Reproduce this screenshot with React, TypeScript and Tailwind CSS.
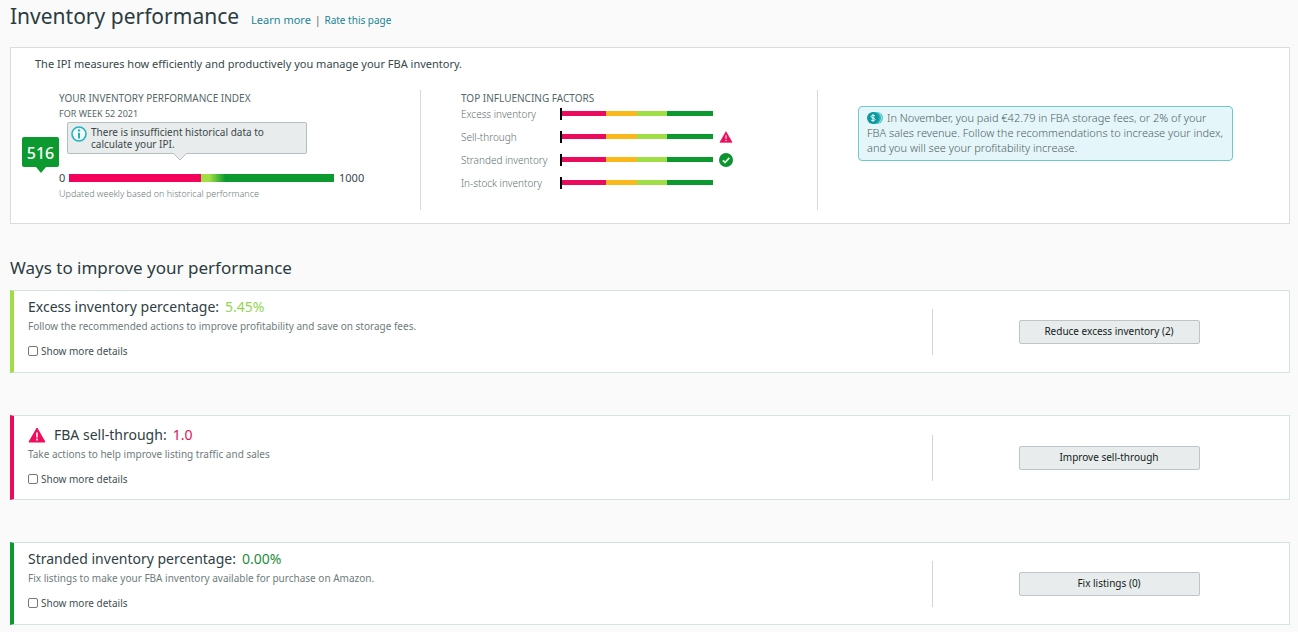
import React, { useState } from 'react';

const WarningIcon = ({ className }: { className: string }) => (
    <svg viewBox="0 0 18 16" className={className} aria-hidden="true">
        <path d="M9 1 17 15H1Z" fill="#ef0d5c" stroke="#ef0d5c" strokeWidth="1" strokeLinejoin="round" />
        <path d="M9 5.600V10.400" stroke="#ffd9e6" strokeWidth="1.8" />
        <circle cx="9" cy="12.600" r="1.1" fill="#ffd9e6" />
    </svg>
);

const CheckIcon = () => (
    <svg viewBox="0 0 14 14" className="size-3.5" aria-hidden="true">
        <circle cx="7" cy="7" r="7" fill="#0c9230" />
        <path d="M3.8 7.4 6 9.5 10.3 4.9" fill="none" stroke="#d9f7c9" strokeWidth="1.8" />
    </svg>
);

const InfoIcon = () => (
    <svg viewBox="0 0 16 16" className="size-4 shrink-0" aria-hidden="true">
        <circle cx="8" cy="8" r="7" fill="#f4fbfb" stroke="#1fb3c0" strokeWidth="1.6" />
        <path d="M8 6.8V12.4" stroke="#1fb3c0" strokeWidth="2" />
        <circle cx="8" cy="4.4" r="1.2" fill="#1fb3c0" />
    </svg>
);

const CoinsIcon = () => (
    <svg viewBox="0 0 16 12" className="mr-1 inline-block h-3 w-4 align-[-2px]" aria-hidden="true">
        <circle cx="10" cy="6" r="6" fill="#4cc3c9" />
        <circle cx="8.8" cy="6" r="6" fill="#b8eaec" />
        <circle cx="8" cy="6" r="6" fill="#2fb0b6" />
        <circle cx="6" cy="6" r="6" fill="#0b9aa0" />
        <path d="M8 4.1C7.6 3.5 6.9 3.3 6 3.3 4.9 3.3 4.1 3.8 4.1 4.6 4.1 6.4 8 5.5 8 7.4 8 8.2 7.2 8.7 6 8.7 5 8.7 4.3 8.4 3.9 7.8M6 2.2V9.8" fill="none" stroke="#fff" strokeWidth="1" />
    </svg>
);

type Status = 'warning' | 'ok';

const factors: { label: string; status?: Status }[] = [
    { label: 'Excess inventory' },
    { label: 'Sell-through', status: 'warning' },
    { label: 'Stranded inventory', status: 'ok' },
    { label: 'In-stock inventory' },
];

const FactorRow = ({ label, status }: { label: string; status?: Status }) => (
    <li className="flex h-[23px] items-center">
        <span className="w-[99px] shrink-0 pt-0.5 text-[10px] font-light whitespace-nowrap text-[#5f7070]">{label}</span>
        <span className="h-3 w-0.5 bg-black" />
        <span className="mr-1.5 flex h-[5px] w-[151px]">
            <span className="w-[44px] bg-[#ea0b5b]" />
            <span className="w-[31px] bg-[#fbb81a]" />
            <span className="w-[30px] bg-[#9fdf45]" />
            <span className="flex-1 bg-[#0c9a30]" />
        </span>
        {status === 'warning' && <WarningIcon className="h-3 w-3.5" />}
        {status === 'ok' && <CheckIcon />}
    </li>
);

interface ImproveProps {
    id: string;
    title: string;
    value: string;
    description: string;
    action: string;
    accent: string;
    valueColor: string;
    warning?: boolean;
}

const ImproveCard: React.FC<ImproveProps> = ({ id, title, value, description, action, accent, valueColor, warning }) => {
    const [showMore, setShowMore] = useState(false);

    return (
        <section className={`flex items-center border border-l-4 border-[#d2e4e1] bg-white ${accent}`}>
            <div className={`flex-1 pl-3.5 ${warning ? 'pt-[9px] pb-3' : 'pt-1.5 pb-[13px]'}`}>
                <h3 className="flex items-center text-sm leading-5 text-[#2f4044]">
                    {warning && <WarningIcon className="mr-2 h-4 w-[18px]" />}
                    {title}
                    <span className={`ml-1.5 ${valueColor}`}>{value}</span>
                </h3>
                <p className="text-[10px] leading-[18px] text-[#6f7c7c]">{description}</p>
                <div className="mt-2 flex items-center gap-[3px]">
                    <input
                        id={id}
                        type="checkbox"
                        checked={showMore}
                        onChange={(e) => setShowMore(e.target.checked)}
                        className="size-2.5 appearance-none rounded-xs border border-[#777] bg-white checked:bg-[#0c8a99]"
                    />
                    <label htmlFor={id} className="text-[10px] leading-4 text-[#3f4f52]">Show more details</label>
                </div>
            </div>
            <div className="flex h-[46px] w-[28%] items-center justify-center border-l border-[#d0d5d5] pr-1">
                <button
                    type="button"
                    className="h-6 w-[181px] rounded-xs border border-[#bcc6c6] bg-[#e8ecec] text-[10px] text-[#111c20]"
                >
                    {action}
                </button>
            </div>
        </section>
    );
};

export default function App() {
    return (
        <main className="min-h-screen bg-[#fafafa] pr-2 pb-2 pl-2.5 font-['Noto_Sans','Open_Sans',sans-serif]">
            <header className="flex h-[47px] items-baseline">
                <h1 className="text-[21px] leading-8 text-[#2b3c40]">Inventory performance</h1>
                <a href="#learn" className="ml-3 text-[11px] text-[#1b8496]">Learn more</a>
                <span className="mx-1 text-[10px] text-[#555]">|</span>
                <a href="#rate" className="text-[10px] text-[#1b8496]">Rate this page</a>
            </header>

            <section className="border border-[#d9dcdc] bg-white pt-2 pb-[13px]">
                <p className="pl-6 text-[11px] leading-4 text-[#37474a]">
                    The IPI measures how efficiently and productively you manage your FBA inventory.
                </p>
                <div className="mt-[18px] grid min-h-[120px] grid-cols-[410fr_397fr_471fr]">
                    <div className="flex border-r border-[#d5d9d9]">
                        <div className="ml-[11px] w-[37px] shrink-0 pt-[47px]">
                            <div className="relative flex h-[30px] items-center justify-center rounded-xs bg-[#0c9a30] pt-0.5 text-base font-medium text-white">
                                516
                                <span className="absolute top-full left-3.5 border-x-5 border-t-6 border-x-transparent border-t-[#0c9a30]" />
                            </div>
                        </div>
                        <div className="w-[310px]">
                            <h2 className="text-[10px] leading-4 text-[#566769]">YOUR INVENTORY PERFORMANCE INDEX</h2>
                            <p className="text-[9px] leading-4 text-[#566769]">FOR WEEK 52 2021</p>
                            <div className="relative ml-2 flex h-8 w-60 gap-1 rounded-xs border border-[#b5bebe] bg-[#e8ecec] px-[3px] pt-[3px]">
                                <InfoIcon />
                                <p className="text-[10px] leading-3 text-[#3a484b]">
                                    There is insufficient historical data to<br />calculate your IPI.
                                </p>
                                <svg viewBox="0 0 14 8" className="absolute top-[30px] left-[105px] h-2 w-3.5" aria-hidden="true">
                                    <path d="M0 0 7 7 14 0" fill="#e8ecec" stroke="#b5bebe" />
                                </svg>
                            </div>
                            <div className="mt-4 flex h-4 items-center text-[11px] text-[#3a484b]">
                                <span className="w-2.5">0</span>
                                <span className="h-2 w-[265px] bg-[linear-gradient(90deg,#f5005a_0_50%,#9fdf45_50%_53%,#0c9a30_59%)]" />
                                <span className="ml-[5px]">1000</span>
                            </div>
                            <p className="text-[9px] leading-4 font-light text-[#6c7979]">Updated weekly based on historical performance</p>
                        </div>
                    </div>
                    <div className="border-r border-[#d5d9d9] pl-10">
                        <h2 className="text-[10px] leading-4 text-[#566769]">TOP INFLUENCING FACTORS</h2>
                        <ul className="-mt-1">
                            {factors.map((factor) => (
                                <FactorRow key={factor.label} {...factor} />
                            ))}
                        </ul>
                    </div>
                    <div className="pt-4 pl-10">
                        <p className="w-[375px] rounded-sm border border-[#6cc9cd] bg-[#e4f6f9] px-2 pt-[3px] pb-[5px] text-[11px] leading-[15px] font-light text-[#506164]">
                            <CoinsIcon />
                            In November, you paid €42.79 in FBA storage fees, or 2% of your<br />
                            FBA sales revenue. Follow the recommendations to increase your index,<br />
                            and you will see your profitability increase.
                        </p>
                    </div>
                </div>
            </section>

            <h2 className="mt-8 mb-2.5 text-[17px] leading-6 text-[#2b3c40]">Ways to improve your performance</h2>
            <div className="flex flex-col gap-[42px]">
                <ImproveCard
                    id="excess-details"
                    title="Excess inventory percentage:"
                    value="5.45%"
                    description="Follow the recommended actions to improve profitability and save on storage fees."
                    action="Reduce excess inventory (2)"
                    accent="border-l-[#9fdf45]"
                    valueColor="text-[#93d653]"
                />
                <ImproveCard
                    id="sell-through-details"
                    title="FBA sell-through:"
                    value="1.0"
                    description="Take actions to help improve listing traffic and sales"
                    action="Improve sell-through"
                    accent="border-l-[#ea0b5b]"
                    valueColor="text-[#dc1253]"
                    warning
                />
                <ImproveCard
                    id="stranded-details"
                    title="Stranded inventory percentage:"
                    value="0.00%"
                    description="Fix listings to make your FBA inventory available for purchase on Amazon."
                    action="Fix listings (0)"
                    accent="border-l-[#0c9a30]"
                    valueColor="text-[#1e8e3a]"
                />
            </div>
        </main>
    );
}
